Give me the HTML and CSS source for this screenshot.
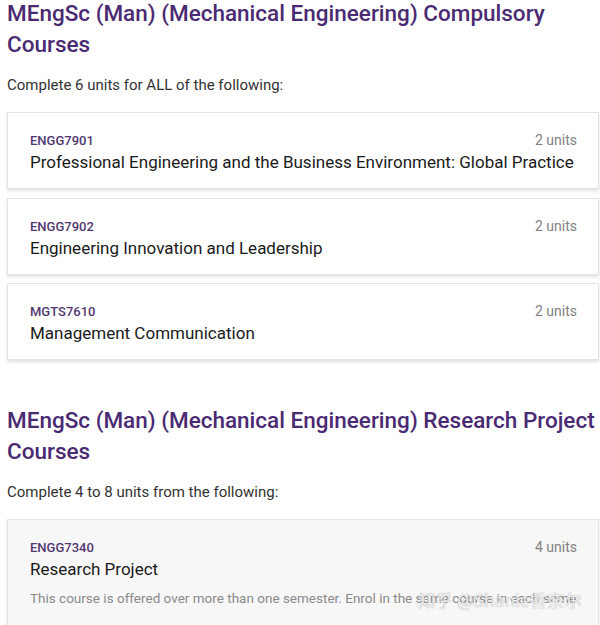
FILE: index.html
```html
<!DOCTYPE html>
<html>
<head>
<meta charset="utf-8">
<link rel="stylesheet" href="styles.css">
</head>
<body>
<section class="group">
  <h2 class="group-title">MEngSc (Man) (Mechanical Engineering) Compulsory Courses</h2>
  <p class="group-rule">Complete 6 units for ALL of the following:</p>
  <div class="card-list">
    <div class="card">
      <div class="card-top"><span class="code">ENGG7901</span><span class="units">2 units</span></div>
      <div class="title">Professional Engineering and the Business Environment: Global Practice</div>
    </div>
    <div class="card">
      <div class="card-top"><span class="code">ENGG7902</span><span class="units">2 units</span></div>
      <div class="title">Engineering Innovation and Leadership</div>
    </div>
    <div class="card">
      <div class="card-top"><span class="code">MGTS7610</span><span class="units">2 units</span></div>
      <div class="title">Management Communication</div>
    </div>
  </div>
</section>
<section class="group group-second">
  <h2 class="group-title">MEngSc (Man) (Mechanical Engineering) Research Project Courses</h2>
  <p class="group-rule">Complete 4 to 8 units from the following:</p>
  <div class="card-list">
    <div class="card card-muted">
      <div class="card-top"><span class="code">ENGG7340</span><span class="units">4 units</span></div>
      <div class="title">Research Project</div>
      <div class="desc">This course is offered over more than one semester. Enrol in the same course in each semester.</div>
    </div>
  </div>
</section>
<div class="watermark">知乎 @Shanie香奈尔</div>
</body>
</html>
```
FILE: styles.css
```css
html, body {
  margin: 0;
  padding: 0;
  background: #ffffff;
  overflow: hidden;
}
body {
  font-family: Roboto, "Noto Sans", Arial, sans-serif;
  padding: 0 1px 0 7px;
  position: relative;
  height: 625px;
}
.group-title {
  margin: -2px 0 0 0;
  font-size: 22.5px;
  font-weight: 500;
  line-height: 31px;
  color: #4a2a72;
}
.group-rule {
  margin: 15px 0 0 0;
  font-size: 15px;
  line-height: 20px;
  color: #333333;
}
.card-list {
  margin-top: 17px;
  display: flex;
  flex-direction: column;
  gap: 8.5px;
}
.card {
  border: 1px solid #e4e4e4;
  box-shadow: 0 2px 3px rgba(0,0,0,0.12);
  background: #ffffff;
  padding: 18px 21px 15px 22px;
  height: 77px;
  box-sizing: border-box;
}
.card-muted {
  background: #f7f7f7;
  height: auto;
  padding-bottom: 40px;
}
.card-top {
  display: flex;
  justify-content: space-between;
  align-items: baseline;
}
.code {
  font-size: 13px;
  font-weight: 500;
  color: #52386f;
  line-height: 18px;
}
.units {
  font-size: 14px;
  color: #828282;
  line-height: 18px;
}
.title {
  margin-top: 1px;
  font-size: 17px;
  line-height: 22px;
  color: #1a1a1a;
}
.desc {
  margin-top: 8px;
  font-size: 13.5px;
  line-height: 20px;
  color: #8a8a8a;
  white-space: nowrap;
  overflow: hidden;
}
.group-second {
  margin-top: 47px;
}
.watermark {
  position: absolute;
  left: 418px;
  top: 587px;
  font-size: 17.5px;
  color: rgba(255,255,255,0.8);
  white-space: nowrap;
  font-family: "Noto Sans CJK SC", sans-serif;
  text-shadow: 0 0 1px rgba(110,110,110,0.7);
}
```
